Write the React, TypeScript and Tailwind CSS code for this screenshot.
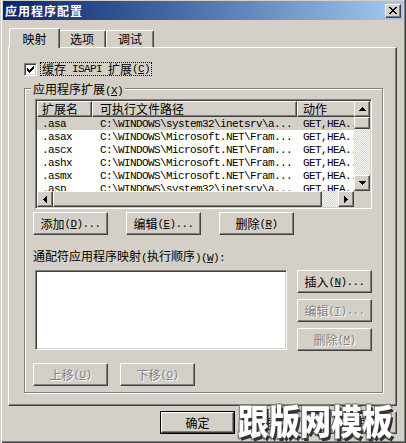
import React from "react";

const mono = "[font-family:'Liberation_Mono',monospace] text-[11px] tracking-[-0.6px]";
const raised =
  "bg-[#d4d0c8] border border-t-white border-l-white border-r-[#404040] border-b-[#404040] shadow-[inset_-1px_-1px_0_#808080]";
const sunken =
  "border border-t-[#808080] border-l-[#808080] border-r-white border-b-white shadow-[inset_1px_1px_0_#404040,inset_-1px_-1px_0_#d4d0c8] p-px";
const hatch =
  "bg-[repeating-conic-gradient(#fff_0_25%,#d4d0c8_0_50%)] [background-size:2px_2px]";
const dim = "text-[#808080] [text-shadow:1px_1px_0_#fff]";

// "&X" marks the accelerator letter
function Amp({ s }: { s: string }) {
  const bits = s.split(/&(.)/);
  return (
    <>
      {bits.map((b, i) => (i % 2 ? <u key={i}>{b}</u> : <React.Fragment key={i}>{b}</React.Fragment>))}
    </>
  );
}

function Txt({ s }: { s: string }) {
  const parts = s.split(/([\x20-\x7e]+)/).filter(Boolean);
  return (
    <>
      {parts.map((p, i) =>
        /^[\x20-\x7e]+$/.test(p) ? (
          <span key={i} className={mono + " whitespace-pre"}>
            <Amp s={p} />
          </span>
        ) : (
          <span key={i}>{p}</span>
        )
      )}
    </>
  );
}

function Btn({ label, disabled }: { label: string; disabled?: boolean }) {
  return (
    <div className={`${raised} w-[75px] h-[23px] flex items-center justify-center shrink-0 ${disabled ? dim : ""}`}>
      <Txt s={label} />
    </div>
  );
}

function Arrow({ dir }: { dir: "up" | "down" | "left" | "right" }) {
  const pts = {
    up: "0,4 3.5,0 7,4",
    down: "0,0 7,0 3.5,4",
    left: "4,0 4,7 0,3.5",
    right: "0,0 4,3.5 0,7",
  }[dir];
  const w = dir === "up" || dir === "down" ? 7 : 4;
  const h = dir === "up" || dir === "down" ? 4 : 7;
  return (
    <div className={`${raised} w-[16px] h-[16px] flex items-center justify-center shrink-0`}>
      <svg width={w} height={h} viewBox={`0 0 ${w} ${h}`} shapeRendering="crispEdges">
        <polygon points={pts} fill="#000" />
      </svg>
    </div>
  );
}

const rows = [
  [".asa", "C:\\WINDOWS\\system32\\inetsrv\\a...", "GET,HEA.."],
  [".asax", "C:\\WINDOWS\\Microsoft.NET\\Fram...", "GET,HEA.."],
  [".ascx", "C:\\WINDOWS\\Microsoft.NET\\Fram...", "GET,HEA.."],
  [".ashx", "C:\\WINDOWS\\Microsoft.NET\\Fram...", "GET,HEA.."],
  [".asmx", "C:\\WINDOWS\\Microsoft.NET\\Fram...", "GET,HEA.."],
  [".asp", "C:\\WINDOWS\\system32\\inetsrv\\a...", "GET,HEA.."],
];

function ExtList() {
  return (
    <div className={`${sunken} ml-[2px] w-[337px] h-[110px] bg-white flex flex-col`}>
      <div className="flex flex-1 min-h-0">
        <div className="flex-1 overflow-hidden">
          <div className="flex h-[16px] whitespace-nowrap">
            <div className={`${raised} w-[55px] shrink-0 pl-[4px] flex items-center`}>扩展名</div>
            <div className={`${raised} w-[205px] shrink-0 pl-[7px] flex items-center`}>可执行文件路径</div>
            <div className={`${raised} w-[100px] shrink-0 pl-[5px] flex items-center`}>动作</div>
          </div>
          {rows.map((r, i) => (
            <div key={i} className={`flex h-[13px] items-center whitespace-nowrap ${mono} ${i === 0 ? "bg-[#d4d0c8]" : ""}`}>
              <div className="w-[55px] shrink-0 pl-[5px]">{r[0]}</div>
              <div className="w-[205px] shrink-0 pl-[8px]">{r[1]}</div>
              <div className="w-[100px] shrink-0 pl-[6px]">{r[2]}</div>
            </div>
          ))}
        </div>
        <div className="w-[16px] flex flex-col">
          <Arrow dir="up" />
          <div className={`${raised} h-[12px] shrink-0`} />
          <div className={`flex-1 ${hatch}`} />
          <Arrow dir="down" />
        </div>
      </div>
      <div className="flex h-[16px] shrink-0">
        <Arrow dir="left" />
        <div className={`${raised} w-[269px] shrink-0`} />
        <div className={`flex-1 ${hatch}`} />
        <Arrow dir="right" />
        <div className="w-[16px] bg-[#d4d0c8] shrink-0" />
      </div>
    </div>
  );
}

export default function App() {
  return (
    <div className="relative w-[406px] h-[443px] bg-[#d4d0c8] pt-px px-[3px] pb-[3px] text-black text-[12px] leading-[14px] [font-family:'Noto_Sans_CJK_SC',sans-serif] shadow-[inset_1px_0_0_#d4d0c8,inset_2px_0_0_#fff,inset_-1px_-1px_0_#404040,inset_-2px_-2px_0_#808080] overflow-hidden">
      {/* title bar */}
      <div className="h-[19px] flex items-center justify-between pl-[2px] pr-[2px] bg-linear-to-r from-[#0a246a] to-[#a6caf0]">
        <span className="text-white font-bold text-[12px] tracking-[1px]">应用程序配置</span>
        <div className={`${raised} w-[16px] h-[14px] flex items-center justify-center`}>
          <svg width="8" height="7" viewBox="0 0 8 7" shapeRendering="crispEdges">
            <path d="M0 0h2v1h-2zM6 0h2v1h-2zM1 1h2v1h-2zM5 1h2v1h-2zM2 2h4v1h-4zM3 3h2v1h-2zM2 4h4v1h-4zM1 5h2v1h-2zM5 5h2v1h-2zM0 6h2v1h-2zM6 6h2v1h-2z" fill="#000" />
          </svg>
        </div>
      </div>

      <div className="pl-[5px]">
        {/* tabs */}
        <div className="mt-[8px] flex items-end h-[19px] pl-[3px]">
          <div className="relative z-10 -mb-px -ml-[2px] -mr-[2px] w-[51px] h-[20px] bg-[#d4d0c8] border-t border-l border-r border-t-white border-l-white border-r-[#404040] shadow-[inset_-1px_0_0_#808080] rounded-t-[2px] flex items-center justify-center">
            映射
          </div>
          <div className="w-[48px] h-[17px] border-t border-l border-r border-t-white border-l-white border-r-[#404040] shadow-[inset_-1px_0_0_#808080] rounded-t-[2px] flex items-center justify-center">
            选项
          </div>
          <div className="w-[48px] h-[17px] border-t border-l border-r border-t-white border-l-white border-r-[#404040] shadow-[inset_-1px_0_0_#808080] rounded-t-[2px] flex items-center justify-center">
            调试
          </div>
        </div>

        {/* tab page */}
        <div className="w-[389px] h-[359px] border border-t-white border-l-white border-r-[#404040] border-b-[#404040] shadow-[inset_-1px_-1px_0_#808080] pt-[14px] pl-[15px]">
          <div className="flex items-center h-[14px]">
            <div className="w-[13px] h-[13px] bg-white border border-t-[#808080] border-l-[#808080] border-r-white border-b-white shadow-[inset_1px_1px_0_#404040,inset_-1px_-1px_0_#d4d0c8] flex items-center justify-center">
              <svg width="7" height="7" viewBox="0 0 7 7" shapeRendering="crispEdges">
                <path d="M6 0h1v3h-1zM5 1h1v3h-1zM4 2h1v3h-1zM3 3h1v3h-1zM2 4h1v3h-1zM1 3h1v3h-1zM0 2h1v3h-1z" fill="#000" />
              </svg>
            </div>
            <div className="ml-[3px] h-[14px] px-px border border-dotted border-black flex items-center">
              <Txt s="缓存 ISAPI 扩展(&C)" />
            </div>
          </div>

          {/* group box */}
          <div className="relative mt-[12px] w-[359px] h-[305px] border border-[#808080] shadow-[inset_1px_1px_0_#fff,1px_1px_0_#fff] pt-[10px] pl-[8px]">
            <div className="absolute -top-[7px] left-[6px] px-[2px] bg-[#d4d0c8]">
              <Txt s="应用程序扩展(&X)" />
            </div>

            <ExtList />

            <div className="mt-[3px] flex gap-[18px]">
              <Btn label="添加(&D)..." />
              <Btn label="编辑(&E)..." />
              <Btn label="删除(&R)" />
            </div>

            <div className="mt-[14px]">
              <Txt s="通配符应用程序映射(执行顺序)(&W):" />
            </div>

            <div className="mt-[5px] flex">
              <div className={`${sunken} ml-[2px] w-[252px] h-[80px] bg-white`} />
              <div className="ml-[10px] flex flex-col gap-[6px]">
                <Btn label="插入(&N)..." />
                <Btn label="编辑(&T)..." disabled />
                <Btn label="删除(&M)" disabled />
              </div>
            </div>

            <div className="mt-[12px] flex gap-[12px]">
              <Btn label="上移(&U)" disabled />
              <Btn label="下移(&O)" disabled />
            </div>
          </div>
        </div>

        {/* dialog buttons */}
        <div className="mt-[5px] w-[389px] flex justify-end gap-[6px]">
          <div className="border border-black">
            <div className={`${raised} w-[73px] h-[21px] flex items-center justify-center`}>确定</div>
          </div>
          <Btn label="取消" />
          <Btn label="帮助" />
        </div>
      </div>

      {/* watermark */}
      <div className="absolute left-[238px] top-[403px] text-white font-black text-[31px] leading-none [text-shadow:2px_2px_0_#333,-1px_-1px_0_#777,1px_-1px_0_#777,-1px_1px_0_#777] scale-y-[1.12] origin-top">
        跟版网模板
      </div>
    </div>
  );
}
